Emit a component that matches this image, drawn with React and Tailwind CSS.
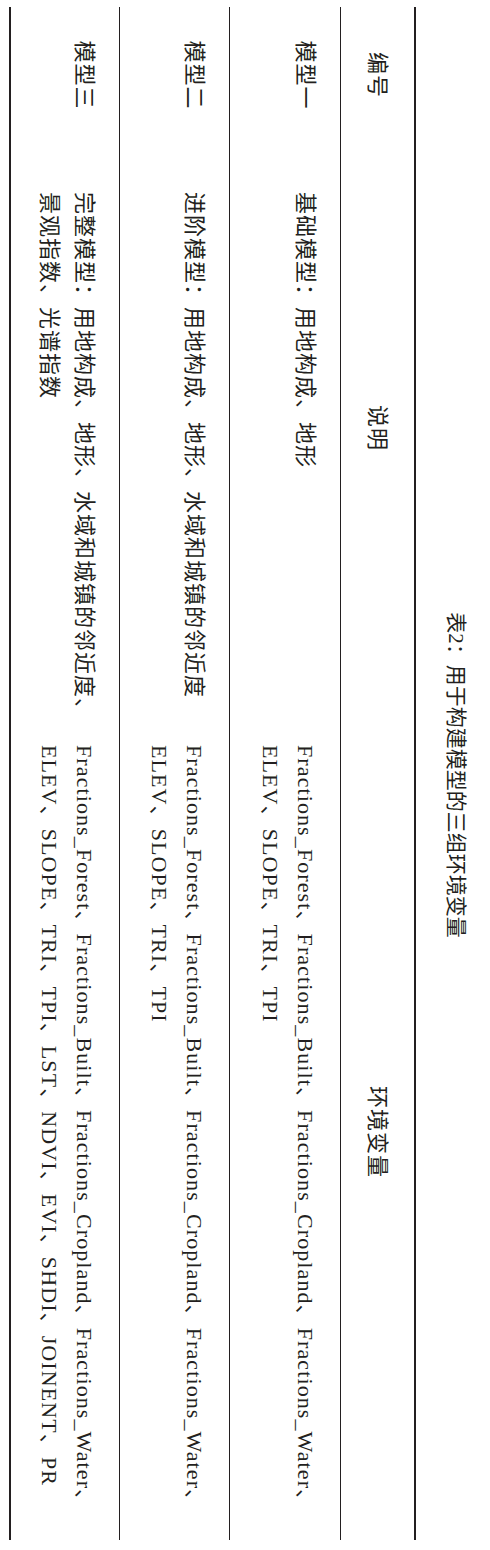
const rows = [
  {
    id: "模型一",
    desc: ["基础模型：用地构成、地形"],
    vars: [
      "Fractions_Forest、Fractions_Built、Fractions_Cropland、Fractions_Water、",
      "ELEV、SLOPE、TRI、TPI",
    ],
    h: "h-[111px]",
  },
  {
    id: "模型二",
    desc: ["进阶模型：用地构成、地形、水域和城镇的邻近度"],
    vars: [
      "Fractions_Forest、Fractions_Built、Fractions_Cropland、Fractions_Water、",
      "ELEV、SLOPE、TRI、TPI",
    ],
    h: "h-[110px]",
  },
  {
    id: "模型三",
    desc: ["完整模型：用地构成、地形、水域和城镇的邻近度、", "景观指数、光谱指数"],
    vars: [
      "Fractions_Forest、Fractions_Built、Fractions_Cropland、Fractions_Water、",
      "ELEV、SLOPE、TRI、TPI、LST、NDVI、EVI、SHDI、JOINENT、PR",
    ],
    h: "h-[108px]",
  },
]

export default function App() {
  return (
    <div className="w-[490px] h-[1550px] overflow-hidden bg-white">
      {/* the page is a landscape table turned a quarter clockwise */}
      <div
        className="w-[1550px] h-[490px] origin-top-left rotate-90 translate-x-[490px] text-[22px] text-[#231f20]"
        style={{ fontFamily: '"Liberation Serif", "Noto Sans CJK SC", serif' }}
      >
        <div className="h-[74px] pb-[4px] flex items-center justify-center whitespace-nowrap text-[21px]">
          表2：用于构建模型的三组环境变量
        </div>

        <div className="ml-[7px] w-[1533px] border-t-2 border-b-2 border-[#231f20]">
          {/* header */}
          <div className="h-[74px] flex items-center border-b border-[#231f20] tracking-[1px]">
            <div className="w-[136px] text-center">编号</div>
            <div className="w-[581px] pr-[11px] text-center">说明</div>
            <div className="flex-1 text-center">环境变量</div>
          </div>

          {rows.map((r, i) => (
            <div
              key={r.id}
              className={`${r.h} flex items-start pt-[17px] leading-[35px] ${
                i < rows.length - 1 ? "border-b border-[#231f20]" : ""
              }`}
            >
              <div className="w-[136px] text-center tracking-[1px]">{r.id}</div>
              <div className="w-[581px] pl-[49px] tracking-[1px]">
                {r.desc.map((d) => (
                  <div key={d} className="whitespace-nowrap">{d}</div>
                ))}
              </div>
              <div className="flex-1 pl-[21px] tracking-[1.1px]">
                {r.vars.map((v) => (
                  <div key={v} className="whitespace-nowrap">{v}</div>
                ))}
              </div>
            </div>
          ))}
        </div>
      </div>
    </div>
  )
}
